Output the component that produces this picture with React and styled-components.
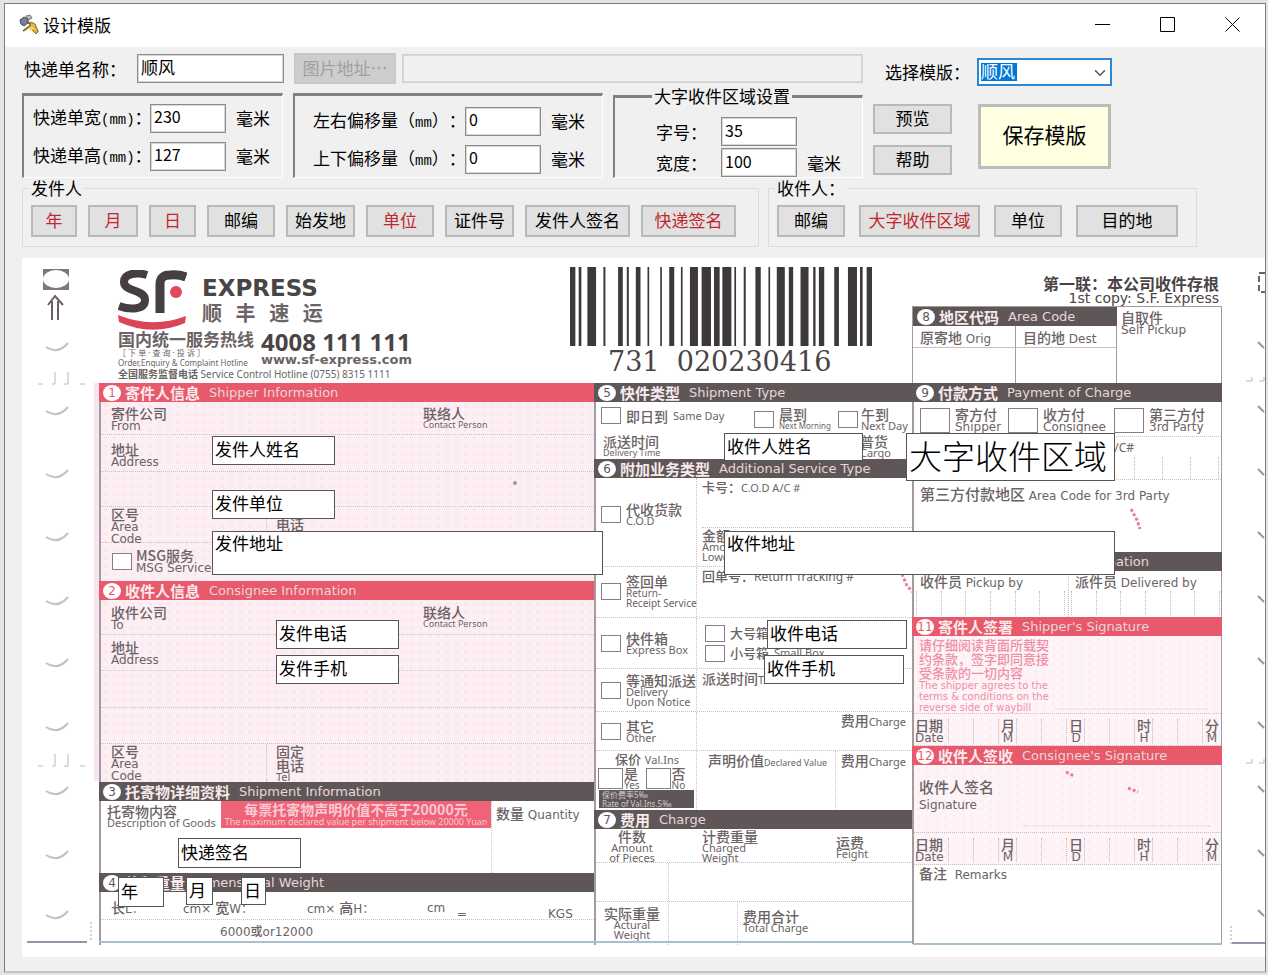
import React from "react";
import styled, { createGlobalStyle, css } from "styled-components";
import { ChevronDown } from "lucide-react";

const ui = `"Noto Sans CJK SC", "Liberation Sans", sans-serif`;
const print = `"DejaVu Sans", "Noto Sans CJK SC", sans-serif`;
const narrow = `"Noto Sans", "Noto Sans CJK SC", sans-serif`;
const ink = "#6b6365";
const bar = "#5f5757";
const red = "#e8596b";

const GlobalStyle = createGlobalStyle`
  * {
    box-sizing: border-box;
  }
  body {
    margin: 0;
    background: #e4e4e4;
    font: 17px/20px ${ui};
    color: #000;
    text-spacing-trim: space-all;
  }
  button, input, select, textarea {
    font: inherit;
    color: inherit;
    margin: 0;
    border-radius: 0;
  }
`;

/* ---------- window ---------- */

const Window = styled.main`
  margin: 3px 2px 4px 4px;
  border: 1px solid #7d7d7d;
  border-bottom: 2px solid #c4c4c4;
  background: #f0f0f0;
  overflow: hidden;
`;

const TitleBar = styled.header`
  display: flex;
  align-items: center;
  height: 43px;
  padding: 0 0 2px 14px;
  background: #fff;
`;

const Title = styled.h1`
  flex: 1;
  margin: 0 0 0 4px;
  font-size: 17px;
  font-weight: 400;
`;

const Caption = styled.button`
  display: flex;
  align-items: center;
  justify-content: center;
  width: 65px;
  height: 40px;
  padding: 0;
  border: none;
  background: none;
`;

const Toolbar = styled.div`
  display: flex;
  gap: 10px;
  padding: 6px 0 0 17px;
`;

const Settings = styled.div`
  flex: 1;
  min-width: 0;
`;

const Actions = styled.div`
  width: 392px;
  padding-top: 5px;
`;

const Line = styled.div`
  display: flex;
  align-items: center;
`;

const NameLabel = styled.label`
  width: 115px;
  padding-left: 2px;
`;

const TextBox = styled.input`
  width: ${p => p.$w || 76}px;
  height: ${p => p.$h || 29}px;
  padding: 0 3px 4px;
  border: 1px solid #8a8a8a;
  background: #fff;
  outline: 1px solid #d8d8d8;
  outline-offset: -2px;
  font-size: ${p => p.$size || 16}px;
`;

const PathBox = styled(TextBox)`
  flex: 1;
  min-width: 0;
  margin-left: 6px;
  border-color: #d0d0d0;
  background: #f0f0f0;
`;

const Button = styled.button`
  width: ${p => p.$w}px;
  height: ${p => p.$h || 32}px;
  padding: 0 0 2px;
  border: 2px solid #b9b9b9;
  background: #e1e1e1;
  color: ${p => (p.$red ? "#c0282d" : "#000")};
  white-space: nowrap;
  line-height: 20px;
  &:disabled {
    border-color: #c8c8c8;
    background: #cdcdcd;
    color: #a0a0a0;
  }
`;

const PathButton = styled(Button)`
  margin-left: 10px;
`;

const SaveButton = styled(Button)`
  padding-bottom: 6px;
  border: 3px solid #bcbcbc;
  background: #ffffe1;
  font-size: 21px;
`;

const Groups = styled.div`
  display: flex;
  align-items: flex-end;
  gap: 10px;
  margin-top: 3px;
`;

const Group = styled.fieldset`
  display: flex;
  flex-direction: column;
  gap: 8px;
  width: ${p => p.$w}px;
  height: 85px;
  min-width: 0;
  margin: 0;
  padding: ${p => p.$pad};
  border: 1px solid #e0e0e0;
  border-top: 3px solid #808080;
  border-left: 2px solid #808080;
  border-bottom-color: #fff;
  border-right-color: #fff;
`;

const BigGroup = styled(Group)`
  flex: 1;
  gap: 2px;
  height: 91px;
  legend {
    margin: 0 auto 0 37px;
    padding: 0 2px;
    line-height: 18px;
  }
`;

const GroupLine = styled.div`
  display: grid;
  grid-template-columns: ${p => p.$label}px 76px auto;
  align-items: center;
  height: ${p => p.$h || 30}px;
  white-space: nowrap;
  > span {
    padding-left: 10px;
  }
`;

const BigLabel = styled.div`
  padding-left: 41px;
`;

const Mono = styled.span`
  font: 14px/20px "Liberation Mono", monospace;
`;

const ComboLabel = styled.label`
  width: 104px;
  padding-left: 12px;
`;

const Combo = styled.div`
  position: relative;
  select {
    width: 135px;
    height: 28px;
    padding: 0 2px 3px;
    appearance: none;
    border: 2px solid #2f86d6;
    background: linear-gradient(#0078d7, #0078d7) 2px 3px / 36px 18px no-repeat #fff;
    color: #fff;
    outline: none;
  }
  svg {
    position: absolute;
    top: 6px;
    right: 3px;
    pointer-events: none;
  }
`;

const ActionRow = styled.div`
  display: flex;
  gap: 26px;
  padding-top: 18px;
`;

const Stack = styled.div`
  display: flex;
  flex-direction: column;
  gap: 11px;
`;

const Parts = styled.div`
  display: flex;
  gap: 9px;
  padding: 1px 0 11px 17px;
`;

const PartGroup = styled.fieldset`
  display: flex;
  gap: ${p => p.$gap}px;
  width: ${p => p.$w}px;
  height: 68px;
  min-width: 0;
  margin: 0;
  padding: 8px 8px 0;
  border: 1px solid #dcdcdc;
  legend {
    margin-left: -2px;
    padding: 0 2px;
    line-height: 18px;
  }
`;

/* ---------- waybill ---------- */

const Paper = styled.section`
  position: relative;
  height: 699px;
  margin: 0 0 14px 17px;
  background: #fff;
  overflow: hidden;
`;

const Scan = styled.div`
  display: grid;
  grid-template-columns: 77px 495px 318px 310px 43px;
  font: 12px/12px ${print};
  color: ${ink};
  white-space: nowrap;
`;

const Column = styled.div`
  display: flex;
  flex-direction: column;
`;

const Head = styled.div`
  display: flex;
  align-items: center;
  gap: 4px;
  height: 19px;
  padding-left: 4px;
  background: ${p => (p.$red ? red : bar)};
  color: #f7e9ec;
  b {
    width: 18px;
    height: 16px;
    border-radius: 50%;
    background: #fff;
    color: ${p => (p.$red ? red : bar)};
    font-weight: 400;
    line-height: 16px;
    text-align: center;
  }
  strong {
    font: 700 15px/18px ${ui};
  }
  em {
    margin-left: 5px;
    font-size: 13px;
    font-style: normal;
    color: #e9d6d9;
  }
`;

const Body = styled.div`
  border-left: 2px solid #a39b9e;
  ${p => p.$edge && "border-right: 1px solid #a39b9e;"}
  ${p =>
    p.$pink &&
    css`
      background: radial-gradient(circle, ${p.$edge ? "#fdeaf0" : "#fbe4ec"} 1px, transparent 2px) 0 0 / 9px 8px,
        ${p.$edge ? "#fef3f7" : "#fdeef4"};
    `}
`;

const Row = styled.div`
  display: flex;
  height: ${p => p.$h}px;
  border-bottom: ${p => (p.$last ? "none" : "1px dotted #c9c0c4")};
`;

const Cell = styled.div`
  flex: ${p => (p.$w ? "none" : 1)};
  width: ${p => (p.$w ? p.$w + "px" : "auto")};
  padding: ${p => p.$pad || "4px 0 0 10px"};
  ${p => p.$line && "border-left: 1px dotted #c9c0c4;"}
  ${p => p.$right && "text-align: right;"}
`;

const Cn = styled.span`
  font: ${p => (p.$bold ? 700 : 500)} ${p => p.$size || 14}px/${p => p.$lh || 14}px ${ui};
`;

const Small = styled.span`
  font: ${p => p.$size || 9}px/10px ${narrow};
`;

const Stacked = styled.div`
  display: flex;
  flex-direction: column;
  align-items: ${p => (p.$center ? "center" : "flex-start")};
`;

const TickLabel = styled.label`
  display: flex;
  align-items: center;
  gap: ${p => p.$gap || 5}px;
  input {
    flex: none;
    appearance: none;
    width: ${p => p.$w || 20}px;
    height: ${p => p.$h || 17}px;
    border: 1px solid #857d80;
    background: #fff;
  }
`;

const Ticks = styled.div`
  display: grid;
  grid-template-columns: repeat(${p => p.$n}, 1fr);
  height: ${p => p.$h}px;
  border-right: 1px dotted #c2b8bc;
  i {
    border-left: 1px dotted #c2b8bc;
  }
`;

const Brand = styled.div`
  height: 125px;
  padding: 12px 0 0 19px;
`;

const BrandRow = styled.div`
  display: flex;
  gap: ${p => p.$gap}px;
`;

const Express = styled.div`
  padding-top: 6px;
  font: 700 23px/24px ${print};
  color: #4a4446;
  div {
    padding-top: 3px;
    font: 700 20px/20px ${ui};
    color: ${ink};
    white-space: pre;
  }
`;

const Hotline = styled.div`
  width: 137px;
`;

const Phone = styled.div`
  font: 700 24px/24px ${narrow};
  color: #4a4446;
  div {
    font: 700 13px/12px ${print};
    color: ${ink};
  }
`;

const Barcode = styled.div`
  height: 125px;
  padding-top: 9px;
  svg {
    display: block;
    margin-left: -24px;
  }
  div {
    padding: 2px 0 0 14px;
    font: 27px/28px "DejaVu Serif", serif;
    color: #4a4446;
    white-space: pre;
  }
`;

const Copy = styled.div`
  height: 48px;
  padding: 18px 3px 0 0;
  text-align: right;
  color: #4a4446;
  font-size: 14px;
  line-height: 13px;
`;

const AreaBlock = styled.div`
  display: grid;
  grid-template-columns: 204px 1fr;
  height: 77px;
  border: 1px solid #a39b9e;
  border-bottom: none;
`;

const AreaGrid = styled.div`
  display: grid;
  grid-template-columns: 103px 1fr;
  grid-template-rows: 22px 36px;
  div {
    padding: 4px 0 0 7px;
    border-right: 1px solid #a39b9e;
    border-bottom: 1px solid #c9c0c4;
  }
`;

const Notice = styled.div`
  width: 270px;
  height: 27px;
  padding: 1px 0;
  background: #ee6377;
  color: #fbc9d2;
`;

const Rate = styled.div`
  width: 95px;
  height: 18px;
  margin-left: 1px;
  padding-left: 3px;
  background: ${bar};
  color: #d5cccf;
  font: 8px/9px ${narrow};
`;

const Terms = styled.div`
  height: 78px;
  padding: 2px 0 0 5px;
  color: #ee8fa6;
  font: 10px/11px ${print};
  border-bottom: 1px dotted #c9c0c4;
`;

const Overlay = styled.svg`
  position: absolute;
  top: 0;
  left: 0;
  pointer-events: none;
`;

const field = css`
  position: absolute;
  left: ${p => p.$x}px;
  top: ${p => p.$y}px;
  width: ${p => p.$w}px;
  height: ${p => p.$h}px;
  padding: 0 2px 4px;
  border: 1px solid #555;
  background: #fff;
  color: #000;
  font: ${p => (p.$big ? `300 33px/40px` : `17px/22px`)} ${ui};
  outline: none;
  resize: none;
`;

const Field = styled.input`
  ${field}
`;

const Area = styled.textarea`
  ${field}
  overflow: hidden;
`;

const senderParts = [
  ["年", 46, true],
  ["月", 50, true],
  ["日", 47, true],
  ["邮编", 68],
  ["始发地", 69],
  ["单位", 68, true],
  ["证件号", 69],
  ["发件人签名", 105],
  ["快递签名", 95, true],
];

const receiverParts = [
  ["邮编", 68],
  ["大字收件区域", 121, true],
  ["单位", 68],
  ["目的地", 102],
];

// x, y, width, height on the paper
const fields = [
  ["发件人姓名", 190, 178, 123, 29],
  ["发件单位", 190, 232, 123, 29],
  ["发件地址", 190, 273, 391, 44],
  ["发件电话", 254, 362, 123, 29],
  ["发件手机", 254, 397, 123, 29],
  ["快递签名", 156, 580, 123, 30],
  ["年", 96, 619, 46, 30],
  ["月", 164, 619, 27, 28],
  ["日", 219, 619, 25, 28],
  ["收件人姓名", 702, 175, 139, 28],
  ["收件地址", 702, 273, 391, 44],
  ["收件电话", 745, 362, 140, 29],
  ["收件手机", 742, 397, 140, 29],
];

const bars = [
  [32, 16], [58, 8], [84, 26], [132, 6], [176, 14], [202, 6], [229, 14], [264, 5], [302, 5], [329, 15],
  [364, 5], [391, 24], [426, 28], [463, 17], [488, 27], [524, 5], [552, 6], [587, 16], [626, 5], [651, 24],
  [687, 13], [722, 24], [760, 7], [777, 16], [823, 14], [864, 27], [900, 8], [920, 16],
];

const holes = [89, 153, 216, 279, 343, 405, 469, 533, 597, 657];

const Heading = ({ n, cn, en, red }) => (
  <Head $red={red}>
    <b>{n}</b>
    <strong>{cn}</strong>
    <em>{en}</em>
  </Head>
);

const Pair = ({ cn, en, center, small }) => (
  <Stacked $center={center}>
    {[].concat(cn).map(t => (
      <Cn key={t}>{t}</Cn>
    ))}
    {[].concat(en).map(t => (small ? <Small key={t} $size={small}>{t}</Small> : <span key={t}>{t}</span>))}
  </Stacked>
);

const Tick = ({ w, h, gap, children }) => (
  <TickLabel $w={w} $h={h} $gap={gap}>
    <input type="checkbox" />
    {children}
  </TickLabel>
);

const TickMarks = ({ n, h }) => (
  <Ticks $n={n} $h={h}>
    {Array.from({ length: n }, (_, i) => (
      <i key={i} />
    ))}
  </Ticks>
);

const DateRow = () => (
  <Row $h={32}>
    <Cell $w={34} $pad="4px 0 0 1px">
      <Pair cn="日期" en="Date" />
    </Cell>
    {[["月", "M"], ["日", "D"], ["时", "H"], ["分", "M"]].map(([cn, en]) => (
      <React.Fragment key={cn}>
        <Cell $w={51} $pad="5px 0 0">
          <TickMarks n={2} h={24} />
        </Cell>
        <Cell $w={17} $pad="4px 0 0 1px">
          <Pair cn={cn} en={en} center />
        </Cell>
      </React.Fragment>
    ))}
  </Row>
);

function AppIcon() {
  return (
    <svg width="20" height="22" viewBox="0 0 20 22">
      <path d="M7 2 11 1 13 4 9 6z" fill="#b9bcc4" stroke="#777" />
      <path d="M1 6 5 3 9 5 9 9 5 12 2 10z" fill="#7480a0" stroke="#454a60" />
      <path d="M8 7 19 18 M4 17 11 12" stroke="#806a28" strokeWidth="2" />
      <path d="M12 8 16 10 19 17 17 20 13 16 11 11z" fill="#e5b93a" stroke="#806a28" />
      <path d="M9 14 13 12 15 15 12 17z" fill="#f0d36a" />
    </svg>
  );
}

function SfLogo() {
  return (
    <svg width="69" height="60" viewBox="0 0 69 60" fill="none">
      <path d="M29 5C19 2 6 3 6 12C6 22 27 19 27 30C27 40 12 40 1 36" stroke="#453f41" strokeWidth="8" />
      <path d="M42 43V14Q42 5 52 5Q60 4 68 7" stroke="#453f41" strokeWidth="9" />
      <circle cx="58" cy="22" r="6" fill="#e0495c" />
      <path d="M0 45Q34 59 68 46L67 53Q34 67 1 52Z" fill="#dc4558" />
    </svg>
  );
}

function ScanMarks() {
  return (
    <Overlay width="1243" height="699" fill="none">
      <path d="M21 11h26v21h-26z" fill="#7d797b" />
      <ellipse cx="34" cy="21" rx="13" ry="9" fill="#fff" />
      <path d="M26 47 33 38 41 47M30 43V62M36 43V62" stroke="#6b5f62" strokeWidth="2" />
      {holes.map(y => (
        <g key={y}>
          <path d={`M24 ${y}Q36 ${y + 8} 46 ${y - 4}`} stroke="#c5c1c3" strokeWidth="2" />
          <path d={`M1236 ${y - 5}l6 6`} stroke="#9b9799" strokeWidth="2" />
        </g>
      ))}
      {[126, 508].map(y => (
        <g key={y} stroke="#bdb8bb">
          <path d={`M16 ${y}h5M30 ${y}h3v-12M42 ${y}h4v-12M58 ${y}h5`} />
          <path d={`M1224 ${y - 3}h6v-4M1237 ${y - 3}h5v-4`} />
        </g>
      ))}
      <path d="M1243 15h-6v19h6" stroke="#6a6668" strokeWidth="2" strokeDasharray="6 3" />
      <path d="M5 684h60M1210 685h33" stroke="#a08fa9" strokeWidth="2" />
      <path d="M69 664v20M1209 668v18" stroke="#a9a2a6" strokeDasharray="2 2" />
      <path d="M72 125h5v398h-5z" fill="#f8e4ee" />
      <g stroke="#ea7f9d" strokeWidth="3" strokeDasharray="3 2">
        <path d="M1109 251l6 11 3 9M880 316l5 12 6 6M1044 514l8 4M1106 530l10 4" />
      </g>
      <path d="M1033 451h154M1000 568h190" stroke="#e3c3cd" strokeDasharray="1 1" />
      <circle cx="493" cy="225" r="2" fill="#a0989b" />
      <path d="M77 684H890M891 686H1200" stroke="#a8bfd0" strokeWidth="2" />
    </Overlay>
  );
}

function LeftColumn() {
  return (
    <Column>
      <Brand>
        <BrandRow $gap={15}>
          <SfLogo />
          <Express>
            EXPRESS
            <div>顺   丰   速   运</div>
          </Express>
        </BrandRow>
        <BrandRow $gap={6}>
          <Hotline>
            <Stacked>
              <Cn $bold $size={17} $lh={18}>国内统一服务热线</Cn>
              <Small $size={8}>［ 下 单 · 查 询 · 投 诉 ］</Small>
              <Small $size={8}>Order,Enquiry & Complaint Hotline</Small>
            </Stacked>
          </Hotline>
          <Phone>
            4008 111 111
            <div>www.sf-express.com</div>
          </Phone>
        </BrandRow>
        <Small $size={10}>
          <b>全国服务监督电话</b> Service Control Hotline (0755) 8315 1111
        </Small>
      </Brand>
      <Heading red n={1} cn="寄件人信息" en="Shipper Information" />
      <Body $pink>
        <Row $h={33}>
          <Cell $w={322}><Pair cn="寄件公司" en="From" /></Cell>
          <Cell $pad="4px 0 0"><Pair cn="联络人" en="Contact Person" small={9} /></Cell>
        </Row>
        <Row $h={37}>
          <Cell $pad="7px 0 0 10px"><Pair cn="地址" en="Address" /></Cell>
        </Row>
        <Row $h={35} />
        <Row $h={36}>
          <Cell $w={165} $pad="0 0 0 10px"><Pair cn="区号" en={["Area", "Code"]} /></Cell>
          <Cell $line $pad="10px 0 0 9px"><Cn>电话</Cn></Cell>
        </Row>
        <Row $h={38} $last>
          <Cell $pad="5px 0 0 11px">
            <Tick gap={4}><Pair cn="MSG服务" en="MSG Service" /></Tick>
          </Cell>
        </Row>
      </Body>
      <Heading red n={2} cn="收件人信息" en="Consignee Information" />
      <Body $pink>
        <Row $h={35}>
          <Cell $w={322} $pad="5px 0 0 10px"><Pair cn="收件公司" en="To" /></Cell>
          <Cell $pad="5px 0 0"><Pair cn="联络人" en="Contact Person" small={9} /></Cell>
        </Row>
        <Row $h={36}>
          <Cell $pad="5px 0 0 10px"><Pair cn="地址" en="Address" /></Cell>
        </Row>
        <Row $h={37} />
        <Row $h={36} />
        <Row $h={38} $last>
          <Cell $w={165} $pad="0 0 0 10px"><Pair cn="区号" en={["Area", "Code"]} /></Cell>
          <Cell $line $pad="0 0 0 9px"><Pair cn={["固定", "电话"]} en="Tel" small={11} /></Cell>
        </Row>
      </Body>
      <Heading n={3} cn="托寄物详细资料" en="Shipment Information" />
      <Body>
        <Row $h={72} $last>
          <Cell $w={120} $pad="3px 0 0 6px"><Pair cn="托寄物内容" en="Description of Goods" small={11} /></Cell>
          <Notice>
            <Stacked $center>
              <Cn $bold $lh={15}>每票托寄物声明价值不高于20000元</Cn>
              <Small>The maximum declared value per shipment below 20000 Yuan</Small>
            </Stacked>
          </Notice>
          <Cell $line $pad="5px 0 0 4px"><Cn>数量</Cn> Quantity</Cell>
        </Row>
      </Body>
      <Heading n={4} cn="体积重量" en="Dimensional Weight" />
      <Body>
        <Row $h={28}>
          <Cell $w={82} $pad="8px 0 0 10px"><Cn>长</Cn>L：</Cell>
          <Cell $w={124} $pad="8px 0 0">cm× <Cn>宽</Cn>W：</Cell>
          <Cell $w={120} $pad="8px 0 0">cm× <Cn>高</Cn>H：</Cell>
          <Cell $w={30} $pad="10px 0 0">cm</Cell>
          <Cell $w={91} $pad="16px 0 0">=</Cell>
          <Cell $pad="16px 0 0">KGS</Cell>
        </Row>
        <Row $h={25} $last>
          <Cell $pad="4px 0 0 119px">6000<Cn $size={12}>或</Cn>or12000</Cell>
        </Row>
      </Body>
    </Column>
  );
}

function MiddleColumn() {
  return (
    <Column>
      <Barcode>
        <svg width="302" height="79" viewBox="32 0 904 237" preserveAspectRatio="none">
          {bars.map(([x, w]) => (
            <rect key={x} x={x} width={w} height="237" fill="#3d393a" />
          ))}
        </svg>
        <div>731  020230416</div>
      </Barcode>
      <Heading n={5} cn="快件类型" en="Shipment Type" />
      <Body>
        <Row $h={31} $last>
          <Cell $w={158} $pad="5px 0 0 5px">
            <Tick><Cn>即日到</Cn><Small $size={11}>Same Day</Small></Tick>
          </Cell>
          <Cell $w={84} $pad="5px 0 0"><Tick><Pair cn="晨到" en="Next Morning" small={8} /></Tick></Cell>
          <Cell $pad="5px 0 0"><Tick gap={3}><Pair cn="午到" en="Next Day" small={11} /></Tick></Cell>
        </Row>
        <Row $h={26} $last>
          <Cell $w={264} $pad="1px 0 0 7px"><Pair cn="派送时间" en="Delivery Time" small={9} /></Cell>
          <Cell $pad="1px 0 0"><Pair cn="普货" en="Cargo" small={11} /></Cell>
        </Row>
      </Body>
      <Heading n={6} cn="附加业务类型" en="Additional Service Type" />
      <Body>
        <Row $h={89}>
          <Cell $w={100} $pad="24px 0 0 5px"><Tick><Pair cn="代收货款" en="C.O.D" small={11} /></Tick></Cell>
          <Cell $line $pad="2px 0 0 5px">
            <Row $h={48}><span><Cn $size={13}>卡号：</Cn><Small $size={11}>C.O.D A/C #</Small></span></Row>
            <Pair cn="金额" en={["Amount", "Lowercase"]} small={11} />
          </Cell>
        </Row>
        <Row $h={51}>
          <Cell $w={100} $pad="7px 0 0 5px"><Tick><Pair cn="签回单" en={["Return-", "Receipt Service"]} small={10} /></Tick></Cell>
          <Cell $line $pad="2px 0 0 5px"><Cn $size={13}>回单号：</Cn><Small $size={12}>Return Tracking #</Small></Cell>
        </Row>
        <Row $h={51}>
          <Cell $w={100} $pad="13px 0 0 5px"><Tick><Pair cn="快件箱" en="Express Box" small={11} /></Tick></Cell>
          <Cell $line $pad="5px 0 0 8px">
            <Tick><Cn $size={13} $lh={20}>大号箱</Cn><Small>Large Box</Small></Tick>
            <Tick><Cn $size={13} $lh={20}>小号箱</Cn><Small $size={11}>Small Box</Small></Tick>
          </Cell>
        </Row>
        <Row $h={43}>
          <Cell $w={100} $pad="4px 0 0 5px"><Tick><Pair cn="等通知派送" en={["Delivery", "Upon Notice"]} small={11} /></Tick></Cell>
          <Cell $line $pad="2px 0 0 5px"><Cn>派送时间</Cn><Small $size={11}>Time</Small></Cell>
        </Row>
        <Row $h={39}>
          <Cell $w={100} $pad="7px 0 0 5px"><Tick><Pair cn="其它" en="Other" small={11} /></Tick></Cell>
          <Cell $line $right $pad="1px 6px 0 0"><Cn>费用</Cn><Small $size={11}>Charge</Small></Cell>
        </Row>
        <Row $h={59} $last>
          <Cell $w={100} $pad="1px 0 0 2px">
            <Stacked $center><span><Cn $size={13}>保价</Cn> <Small $size={11}>Val.Ins</Small></span></Stacked>
            <BrandRow $gap={6}>
              <Tick w={25} h={21} gap={1}><Pair cn="是" en="Yes" small={10} /></Tick>
              <Tick w={25} h={21} gap={1}><Pair cn="否" en="No" small={10} /></Tick>
            </BrandRow>
            <Rate>保价费率5‰<br />Rate of Val.Ins.5‰</Rate>
          </Cell>
          <Cell $line $w={139} $pad="2px 0 0 11px"><Cn>声明价值</Cn><Small $size={9}>Declared Value</Small></Cell>
          <Cell $line $right $pad="2px 6px 0 0"><Cn>费用</Cn><Small $size={11}>Charge</Small></Cell>
        </Row>
      </Body>
      <Heading n={7} cn="费用" en="Charge" />
      <Body>
        <Row $h={34}>
          <Cell $w={72} $pad="0"><Pair center cn="件数" en={["Amount", "of Pieces"]} small={11} /></Cell>
          <Cell $w={134} $pad="0 0 0 34px"><Pair cn="计费重量" en={["Charged", "Weight"]} small={11} /></Cell>
          <Cell $pad="6px 0 0 34px"><Pair cn="运费" en="Feight" small={11} /></Cell>
        </Row>
        <Row $h={39}>
          <Cell $w={72} />
          <Cell $line />
        </Row>
        <Row $h={43} $last>
          <Cell $w={72} $pad="4px 0 0"><Pair center cn="实际重量" en={["Actural", "Weight"]} small={11} /></Cell>
          <Cell $line $w={69} />
          <Cell $line $pad="7px 0 0 5px"><Pair cn="费用合计" en="Total Charge" small={11} /></Cell>
        </Row>
      </Body>
    </Column>
  );
}

function RightColumn() {
  return (
    <Column>
      <Copy>
        <Cn $bold $size={16} $lh={15}>第一联：本公司收件存根</Cn>
        <br />
        1st copy: S.F. Express
      </Copy>
      <AreaBlock>
        <div>
          <Heading n={8} cn="地区代码" en="Area Code" />
          <AreaGrid>
            <div><Cn>原寄地</Cn> Orig</div>
            <div><Cn>目的地</Cn> Dest</div>
            <div />
            <div />
          </AreaGrid>
        </div>
        <Cell $pad="3px 0 0 4px"><Pair cn="自取件" en="Self Pickup" /></Cell>
      </AreaBlock>
      <Heading n={9} cn="付款方式" en="Payment of Charge" />
      <Body $edge>
        <Row $h={35}>
          <Cell $w={88} $pad="5px 0 0 6px"><Tick w={30} h={25}><Pair cn="寄方付" en="Shipper" /></Tick></Cell>
          <Cell $w={106} $pad="5px 0 0 6px"><Tick w={30} h={25}><Pair cn="收方付" en="Consignee" /></Tick></Cell>
          <Cell $pad="5px 0 0 6px"><Tick w={30} h={25}><Pair cn="第三方付" en="3rd Party" /></Tick></Cell>
        </Row>
        <Row $h={43}>
          <Cell $w={220} $right $pad="2px 0 0"><Cn>月结账号</Cn> <Small $size={12}>A/C#</Small></Cell>
          <Cell $pad="20px 2px 0 0"><TickMarks n={3} h={22} /></Cell>
        </Row>
        <Row $h={72} $last>
          <Cell $pad="7px 0 0 6px"><Cn $size={15}>第三方付款地区</Cn> Area Code for 3rd Party</Cell>
        </Row>
      </Body>
      <Heading n={10} cn="收派员信息" en="Courier Information" />
      <Body $edge>
        <Row $h={46} $last>
          <Cell $w={154} $pad="3px 3px 0 2px">
            <Row $h={17} $last><Cell $pad="0 0 0 4px"><Cn>收件员</Cn> Pickup by</Cell></Row>
            <TickMarks n={6} h={24} />
          </Cell>
          <Cell $line $pad="3px 1px 0 2px">
            <Row $h={17} $last><Cell $pad="0 0 0 4px"><Cn>派件员</Cn> Delivered by</Cell></Row>
            <TickMarks n={6} h={24} />
          </Cell>
        </Row>
      </Body>
      <Heading red n={11} cn="寄件人签署" en="Shipper's Signature" />
      <Body $edge $pink>
        <Terms>
          <Stacked>
            <Cn $size={13}>请仔细阅读背面所载契</Cn>
            <Cn $size={13}>约条款，签字即同意接</Cn>
            <Cn $size={13}>受条款的一切内容</Cn>
            <span>The shipper agrees to the</span>
            <span>terms & conditions on the</span>
            <span>reverse side of waybill</span>
          </Stacked>
        </Terms>
        <DateRow />
      </Body>
      <Heading red n={12} cn="收件人签收" en="Consignee's Signature" />
      <Body $edge $pink>
        <Row $h={68}>
          <Cell $pad="15px 0 0 5px">
            <Row $h={19} $last><Cn $size={15}>收件人签名</Cn></Row>
            <span>Signature</span>
          </Cell>
        </Row>
        <DateRow />
      </Body>
      <Body $edge>
        <Row $h={79} $last>
          <Cell $pad="1px 0 0 5px"><Cn>备注</Cn>&nbsp; Remarks</Cell>
        </Row>
      </Body>
    </Column>
  );
}

const Setting = ({ label, id, value, unit, w, h }) => (
  <GroupLine $label={w} $h={h}>
    <label htmlFor={id}>{label}</label>
    <TextBox id={id} defaultValue={value} />
    {unit && <span>毫米</span>}
  </GroupLine>
);

export default function App() {
  return (
    <Window>
      <GlobalStyle />
      <TitleBar>
        <AppIcon />
        <Title>设计模版</Title>
        <Caption aria-label="最小化">
          <svg width="15" height="15" stroke="#000"><path d="M0 7.5h15" /></svg>
        </Caption>
        <Caption aria-label="最大化">
          <svg width="15" height="15" fill="none" stroke="#000"><path d="M.5.5h14v14H.5z" /></svg>
        </Caption>
        <Caption aria-label="关闭">
          <svg width="15" height="15" stroke="#000"><path d="M.5.5l14 14M14.5.5l-14 14" /></svg>
        </Caption>
      </TitleBar>

      <Toolbar>
        <Settings>
          <Line>
            <NameLabel htmlFor="name">快递单名称：</NameLabel>
            <TextBox id="name" $w={147} $size={17} defaultValue="顺风" />
            <PathButton $w={102} $h={31} disabled>图片地址…</PathButton>
            <PathBox aria-label="图片地址" disabled />
          </Line>
          <Groups>
            <Group $w={261} $pad="7px 9px 0">
              <Setting id="w" w={117} label={<>快递单宽<Mono>(mm)</Mono>：</>} value="230" unit />
              <Setting id="h" w={117} label={<>快递单高<Mono>(mm)</Mono>：</>} value="127" unit />
            </Group>
            <Group $w={310} $pad="10px 18px 0">
              <Setting id="dx" w={152} label={<>左右偏移量（<Mono>mm</Mono>）：</>} value="0" unit />
              <Setting id="dy" w={152} label={<>上下偏移量（<Mono>mm</Mono>）：</>} value="0" unit />
            </Group>
            <BigGroup $pad="12px 0 0 0">
              <legend>大字收件区域设置</legend>
              <Setting id="size" w={106} h={29} label={<BigLabel>字号：</BigLabel>} value="35" />
              <Setting id="width" w={106} h={29} label={<BigLabel>宽度：</BigLabel>} value="100" unit />
            </BigGroup>
          </Groups>
        </Settings>
        <Actions>
          <Line>
            <ComboLabel htmlFor="tpl">选择模版：</ComboLabel>
            <Combo>
              <select id="tpl">
                <option>顺风</option>
              </select>
              <ChevronDown size={18} color="#555" strokeWidth={2} />
            </Combo>
          </Line>
          <ActionRow>
            <Stack>
              <Button $w={79} $h={30}>预览</Button>
              <Button $w={79} $h={30}>帮助</Button>
            </Stack>
            <SaveButton $w={133} $h={65}>保存模版</SaveButton>
          </ActionRow>
        </Actions>
      </Toolbar>

      <Parts>
        <PartGroup $w={737} $gap={11}>
          <legend>发件人</legend>
          {senderParts.map(([text, w, isRed]) => (
            <Button key={text} $w={w} $red={isRed}>{text}</Button>
          ))}
        </PartGroup>
        <PartGroup $w={429} $gap={14}>
          <legend>收件人：</legend>
          {receiverParts.map(([text, w, isRed]) => (
            <Button key={text} $w={w} $red={isRed}>{text}</Button>
          ))}
        </PartGroup>
      </Parts>

      <Paper>
        <Scan>
          <div />
          <LeftColumn />
          <MiddleColumn />
          <RightColumn />
        </Scan>
        <ScanMarks />
        {fields.map(([text, x, y, w, h]) => {
          const Box = h > 40 ? Area : Field;
          return <Box key={text} $x={x} $y={y} $w={w} $h={h} aria-label={text} defaultValue={text} />;
        })}
        <Field $x={884} $y={175} $w={209} $h={48} $big aria-label="大字收件区域" defaultValue="大字收件区域" />
      </Paper>
    </Window>
  );
}
